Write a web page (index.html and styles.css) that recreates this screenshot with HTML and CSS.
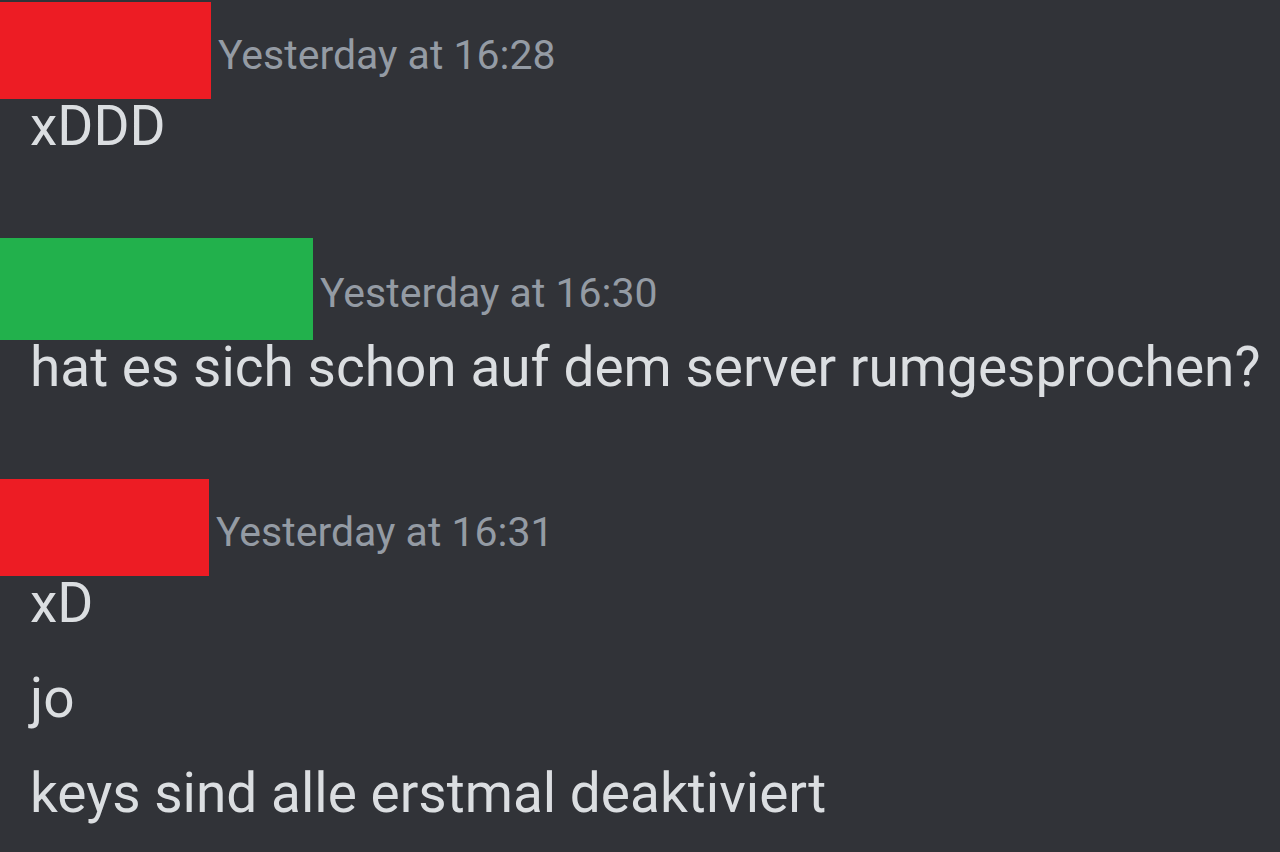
FILE: index.html
```html
<!DOCTYPE html>
<html lang="en">
<head>
    <meta charset="UTF-8">
    <title>Chat</title>
    <link rel="stylesheet" href="styles.css">
</head>
<body>

<main class="chat">
    <!-- first group -->
    <div class="message-group">
        <div class="message-header">
            <div class="name-block red" style="width: 211px; height: 97px;"></div>
            <span class="timestamp">Yesterday at 16:28</span>
        </div>
        <div class="message">xDDD</div>
    </div>

    <div class="message-group">
        <div class="message-header">
            <div class="name-block green" style="width: 313px; height: 102px;"></div>
            <span class="timestamp">Yesterday at 16:30</span>
        </div>
        <div class="message">hat es sich schon auf dem server rumgesprochen?</div>
    </div>

    <div class="message-group">
        <div class="message-header">
            <div class="name-block red" style="width: 209px; height: 97px;"></div>
            <span class="timestamp">Yesterday at 16:31</span>
        </div>
        <div class="message">xD</div>
        <div class="message">jo</div>
        <div class="message">keys sind alle erstmal deaktiviert</div>
    </div>
</main>

</body>
</html>
```

FILE: styles.css
```css
/* Base */
body {
    margin: 0;
    padding: 0;
    background-color: #313338;
    font-family: Roboto, "Noto Sans", sans-serif;
}

.chat {
    padding-top: 2px;
}

/* Message groups */
.message-group {
    margin-bottom: 64px;
}

.message-group:last-child {
    margin-bottom: 0;
}

.message-header {
    display: flex;
    align-items: center;
    gap: 7px;
}

.name-block.red {
    background-color: #ed1c24;
}

.name-block.green {
    background-color: #22b14c;
}

.timestamp {
    color: #949ba4;
    font-size: 41px;
    margin-top: 8px;
}

.message {
    color: #dbdee1;
    font-size: 55px;
    line-height: 95px;
    padding-left: 30px;
}

.message-header + .message {
    margin-top: -20px;
}
```
